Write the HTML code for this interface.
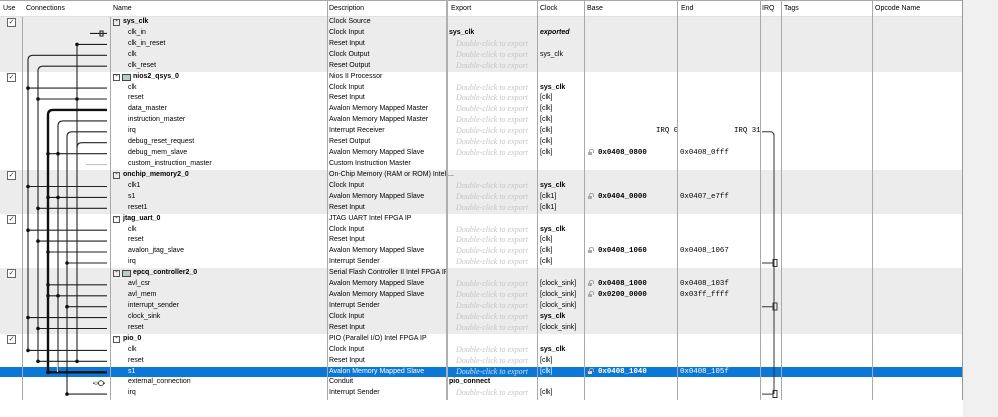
<!DOCTYPE html>
<html><head><meta charset="utf-8"><style>
*{margin:0;padding:0;box-sizing:border-box}
body{width:998px;height:417px;background:#fff;position:relative;overflow:hidden;font-family:"Liberation Sans",Tahoma,sans-serif;font-size:7px;color:#000}
#right{position:absolute;left:963px;top:0;width:35px;height:417px;background:#f0f0f0}
#hdr{position:absolute;left:0;top:0;width:963px;height:17px;border-top:1px solid #a8a8a8;border-bottom:1px solid #e0e0e0;background:#fff}
#hdr span{position:absolute;top:4px}
#rows{position:absolute;left:0;top:17px;width:963px}
.r{position:relative;height:10.93px;line-height:10.93px;white-space:nowrap}
.g{background:#ececec}
.sel{background:#0b78d8;color:#fff}
.r span{position:absolute;top:0}
.n{left:128px}
.h{left:123px;font-weight:bold}
.hi{left:133px;font-weight:bold}
.bx{left:113px;top:2px!important;width:7px;height:7px;border:1px solid #555;line-height:4px;font-size:7px;text-align:center}
.ic{left:122px;top:2px!important;width:9px;height:7px;border:1px solid #444;background:#bcc}
.d{left:329px}
.e{left:456px;font-style:italic;color:#c4c4c4;font-family:"Liberation Serif",serif;font-size:8px}
.sel .e{color:#cfe0f5}
.eb{left:449px;font-weight:bold}
.c{left:540px}
.cb{left:540px;font-weight:bold}
.ci{left:540px;font-weight:bold;font-style:italic}
.lk{left:588px;top:4px!important;width:4px;height:3px;background:#aaa}
.lk:before{content:"";position:absolute;left:1px;top:-3px;width:3px;height:3px;border:1px solid #aaa;border-bottom:none;border-radius:2px 2px 0 0}
.b{left:598px;font-family:"Liberation Mono",monospace;font-weight:bold;font-size:7.4px}
.en{left:680px;font-family:"Liberation Mono",monospace;font-size:7.4px}
.ck{left:7px;top:1px!important;width:9px;height:9px;border:1px solid #666;background:#fff;font-size:7px;line-height:7px;text-align:center;color:#333}
.v{position:absolute;top:0;height:400px;width:1px;background:#a9a9a9}
</style></head><body>
<div id="right"></div>
<div id="hdr">
<span style="left:3px">Use</span><span style="left:26px">Connections</span><span style="left:113px">Name</span><span style="left:329px">Description</span><span style="left:451px">Export</span><span style="left:540px">Clock</span><span style="left:587px">Base</span><span style="left:681px">End</span><span style="left:762px">IRQ</span><span style="left:784px">Tags</span><span style="left:875px">Opcode Name</span>
</div>
<div id="rows">
<div class="r g"><span class="ck">✓</span><span class="bx">-</span><span class="h">sys_clk</span><span class="d">Clock Source</span></div>
<div class="r g"><span class="n">clk_in</span><span class="d">Clock Input</span><span class="eb">sys_clk</span><span class="ci">exported</span></div>
<div class="r g"><span class="n">clk_in_reset</span><span class="d">Reset Input</span><span class="e">Double-click to export</span></div>
<div class="r g"><span class="n">clk</span><span class="d">Clock Output</span><span class="e">Double-click to export</span><span class="c">sys_clk</span></div>
<div class="r g"><span class="n">clk_reset</span><span class="d">Reset Output</span><span class="e">Double-click to export</span></div>
<div class="r"><span class="ck">✓</span><span class="bx">-</span><span class="ic"></span><span class="hi">nios2_qsys_0</span><span class="d">Nios II Processor</span></div>
<div class="r"><span class="n">clk</span><span class="d">Clock Input</span><span class="e">Double-click to export</span><span class="cb">sys_clk</span></div>
<div class="r"><span class="n">reset</span><span class="d">Reset Input</span><span class="e">Double-click to export</span><span class="c">[clk]</span></div>
<div class="r"><span class="n">data_master</span><span class="d">Avalon Memory Mapped Master</span><span class="e">Double-click to export</span><span class="c">[clk]</span></div>
<div class="r"><span class="n">instruction_master</span><span class="d">Avalon Memory Mapped Master</span><span class="e">Double-click to export</span><span class="c">[clk]</span></div>
<div class="r"><span class="n">irq</span><span class="d">Interrupt Receiver</span><span class="e">Double-click to export</span><span class="c">[clk]</span><span class="en" style="left:656px">IRQ 0</span><span class="en" style="left:734px">IRQ 31</span></div>
<div class="r"><span class="n">debug_reset_request</span><span class="d">Reset Output</span><span class="e">Double-click to export</span><span class="c">[clk]</span></div>
<div class="r"><span class="n">debug_mem_slave</span><span class="d">Avalon Memory Mapped Slave</span><span class="e">Double-click to export</span><span class="c">[clk]</span><span class="lk"></span><span class="b">0x0408_0800</span><span class="en">0x0408_0fff</span></div>
<div class="r"><span class="n">custom_instruction_master</span><span class="d">Custom Instruction Master</span></div>
<div class="r g"><span class="ck">✓</span><span class="bx">-</span><span class="h">onchip_memory2_0</span><span class="d">On-Chip Memory (RAM or ROM) Intel ...</span></div>
<div class="r g"><span class="n">clk1</span><span class="d">Clock Input</span><span class="e">Double-click to export</span><span class="cb">sys_clk</span></div>
<div class="r g"><span class="n">s1</span><span class="d">Avalon Memory Mapped Slave</span><span class="e">Double-click to export</span><span class="c">[clk1]</span><span class="lk"></span><span class="b">0x0404_0000</span><span class="en">0x0407_e7ff</span></div>
<div class="r g"><span class="n">reset1</span><span class="d">Reset Input</span><span class="e">Double-click to export</span><span class="c">[clk1]</span></div>
<div class="r"><span class="ck">✓</span><span class="bx">-</span><span class="h">jtag_uart_0</span><span class="d">JTAG UART Intel FPGA IP</span></div>
<div class="r"><span class="n">clk</span><span class="d">Clock Input</span><span class="e">Double-click to export</span><span class="cb">sys_clk</span></div>
<div class="r"><span class="n">reset</span><span class="d">Reset Input</span><span class="e">Double-click to export</span><span class="c">[clk]</span></div>
<div class="r"><span class="n">avalon_jtag_slave</span><span class="d">Avalon Memory Mapped Slave</span><span class="e">Double-click to export</span><span class="c">[clk]</span><span class="lk"></span><span class="b">0x0408_1060</span><span class="en">0x0408_1067</span></div>
<div class="r"><span class="n">irq</span><span class="d">Interrupt Sender</span><span class="e">Double-click to export</span><span class="c">[clk]</span></div>
<div class="r g"><span class="ck">✓</span><span class="bx">-</span><span class="ic"></span><span class="hi">epcq_controller2_0</span><span class="d">Serial Flash Controller II Intel FPGA IP</span></div>
<div class="r g"><span class="n">avl_csr</span><span class="d">Avalon Memory Mapped Slave</span><span class="e">Double-click to export</span><span class="c">[clock_sink]</span><span class="lk"></span><span class="b">0x0408_1000</span><span class="en">0x0408_103f</span></div>
<div class="r g"><span class="n">avl_mem</span><span class="d">Avalon Memory Mapped Slave</span><span class="e">Double-click to export</span><span class="c">[clock_sink]</span><span class="lk"></span><span class="b">0x0200_0000</span><span class="en">0x03ff_ffff</span></div>
<div class="r g"><span class="n">interrupt_sender</span><span class="d">Interrupt Sender</span><span class="e">Double-click to export</span><span class="c">[clock_sink]</span></div>
<div class="r g"><span class="n">clock_sink</span><span class="d">Clock Input</span><span class="e">Double-click to export</span><span class="cb">sys_clk</span></div>
<div class="r g"><span class="n">reset</span><span class="d">Reset Input</span><span class="e">Double-click to export</span><span class="c">[clock_sink]</span></div>
<div class="r"><span class="ck">✓</span><span class="bx">-</span><span class="h">pio_0</span><span class="d">PIO (Parallel I/O) Intel FPGA IP</span></div>
<div class="r"><span class="n">clk</span><span class="d">Clock Input</span><span class="e">Double-click to export</span><span class="cb">sys_clk</span></div>
<div class="r"><span class="n">reset</span><span class="d">Reset Input</span><span class="e">Double-click to export</span><span class="c">[clk]</span></div>
<div class="r sel"><span class="n">s1</span><span class="d">Avalon Memory Mapped Slave</span><span class="e">Double-click to export</span><span class="c">[clk]</span><span class="lk" style="background:#dde"></span><span class="b">0x0408_1040</span><span class="en">0x0408_105f</span></div>
<div class="r"><span class="n">external_connection</span><span class="d">Conduit</span><span class="eb">pio_connect</span></div>
<div class="r"><span class="n">irq</span><span class="d">Interrupt Sender</span><span class="e">Double-click to export</span><span class="c">[clk]</span></div>
</div>
<div class="v" style="left:22px;top:17px;height:383px"></div>
<div class="v" style="left:110px;top:17px;height:383px"></div>
<div class="v" style="left:327px"></div>
<div class="v" style="left:446px;width:2px;background:#b0b0b0"></div>
<div class="v" style="left:537px"></div>
<div class="v" style="left:584px"></div>
<div class="v" style="left:677px"></div>
<div class="v" style="left:760px"></div>
<div class="v" style="left:781px"></div>
<div class="v" style="left:872px"></div>
<div class="v" style="left:962px;background:#999"></div>
<svg style="position:absolute;left:0;top:0" width="998" height="417">
<g stroke="#222" stroke-width="1.1" fill="none">
<path d="M28 350.4V60.3q0-5 5-5H107"/>
<path d="M38 361.3V71.2q0-5 5-5H107"/>
<path d="M58 372.3V125.9q0-5 5-5H107"/>
<path d="M67 394.1V136.8q0-5 5-5H107"/>
<path d="M77 361.3V44.4H107"/>
<path d="M77 147.7q0-5 5-5H107"/>
<path d="M28 88.1H107M38 99H107M48 153.7H107M28 186.5H107M48 197.4H107M38 208.3H107M28 230.2H107M38 241.1H107M48 252H107M67 263H107M48 284.8H107M48 295.8H107M67 306.7H107M28 317.6H107M38 328.5H107M28 350.4H107M38 361.3H107M67 394.1H107"/>
<path d="M90 33.4H107M103 31v5h-3v-5z"/>
<path d="M97 383.2H105M93 383.2h2"/>
</g>
<path d="M48 372.3V114.9q0-5 5-5H107M48 372.3H107" stroke="#111" stroke-width="2.4" fill="none"/>
<path d="M86 164.6H107" stroke="#bbb" stroke-width="1"/>
<path d="M57.5 362V372" stroke="#ccc" stroke-width="1.2"/>
<g fill="#111">
<circle cx="77" cy="44.4" r="1.8"/><circle cx="28" cy="88.1" r="1.8"/><circle cx="38" cy="99" r="1.8"/><circle cx="77" cy="99" r="1.8"/>
<circle cx="48" cy="153.7" r="1.8"/><circle cx="58" cy="153.7" r="1.8"/><circle cx="28" cy="186.5" r="1.8"/><circle cx="48" cy="197.4" r="1.8"/><circle cx="58" cy="197.4" r="1.8"/><circle cx="38" cy="208.3" r="1.8"/>
<circle cx="28" cy="230.2" r="1.8"/><circle cx="38" cy="241.1" r="1.8"/><circle cx="48" cy="252" r="1.8"/><circle cx="67" cy="263" r="1.8"/>
<circle cx="48" cy="284.8" r="1.8"/><circle cx="48" cy="295.8" r="1.8"/><circle cx="58" cy="295.8" r="1.8"/><circle cx="67" cy="306.7" r="1.8"/><circle cx="28" cy="317.6" r="1.8"/><circle cx="38" cy="328.5" r="1.8"/>
<circle cx="28" cy="350.4" r="1.8"/><circle cx="38" cy="361.3" r="1.8"/><circle cx="77" cy="361.3" r="1.8"/><circle cx="48" cy="372.3" r="2"/><circle cx="67" cy="394.1" r="1.8"/>
</g>
<circle cx="101" cy="383.2" r="2.5" stroke="#333" fill="#fff" stroke-width="0.9"/>
<circle cx="96" cy="383.2" r="1.3" stroke="#999" fill="none" stroke-width="0.8"/>
<g stroke="#333" stroke-width="1" fill="none">
<path d="M762 131.8H770q4 0 4 4V394"/>
<path d="M762 263H773M762 306.7H773M762 394.1H773"/>
<rect x="773" y="259.5" width="4" height="7"/><rect x="773" y="303" width="4" height="7"/><rect x="773" y="390.5" width="4" height="7"/>
</g>
</svg>
</body></html>
